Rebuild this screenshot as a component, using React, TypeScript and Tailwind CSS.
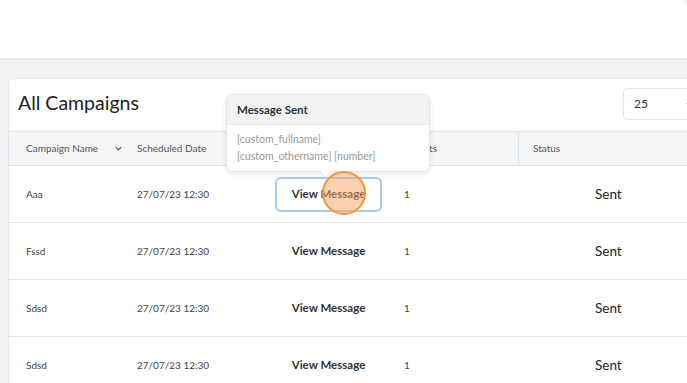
import React from "react";

const rows = [
  { name: "Aaa", focused: true },
  { name: "Fssd" },
  { name: "Sdsd" },
  { name: "Sdsd" },
];

export default function App() {
  return (
    <div
      className="relative w-[687px] h-[383px] overflow-hidden bg-[#f1f2f4]"
      style={{ fontFamily: 'Lato, "Noto Sans", sans-serif' }}
    >
      <div className="h-[59px] w-full bg-white rounded-tr-[6px] border-b border-[#e2e4e8] shadow-[0_1px_2px_rgba(0,0,0,0.06)]" />
      <div className="pt-[19px] pl-[8px]">
        <div className="w-[740px] bg-white rounded-[6px] border border-[#e6e8eb] overflow-hidden">
          <div className="h-[52px] flex items-start justify-between">
            <div className="pl-[9px] pt-[11px] text-[19.5px] leading-[26px] text-[#222] whitespace-nowrap">All Campaigns</div>
            <div className="mt-[9px] mr-[44px] w-[80px] h-[32px] border border-[#e3e5e8] rounded-[4px] flex items-center justify-between pl-[10px] pr-[8px] text-[12px] text-[#333]">
              <span>25</span>
              <svg width="9" height="9" viewBox="0 0 10 10" fill="none" stroke="#666" strokeWidth="1.3">
                <path d="M2 3.5 L5 6.5 L8 3.5" />
              </svg>
            </div>
          </div>
          <div className="grid grid-cols-[111px_140px_130px_128px_1fr] h-[35px] bg-[#f4f5f7] border-y border-[#dfe2e6] text-[10px] text-[#555] items-center whitespace-nowrap">
            <div className="pl-[17px] flex items-center h-full">
              <span>Campaign Name</span>
              <svg className="ml-[16px] shrink-0" width="9" height="9" viewBox="0 0 10 10" fill="none" stroke="#555" strokeWidth="1.3">
                <path d="M2 3.5 L5 6.5 L8 3.5" />
              </svg>
            </div>
            <div className="pl-[17px]">Scheduled Date</div>
            <div />
            <div className="pl-[8px] h-full flex items-center">Contacts</div>
            <div className="pl-[14px] h-full flex items-center border-l border-[#dfe2e6]">Status</div>
          </div>
          {rows.map((r, i) => (
            <div
              key={i}
              className="grid grid-cols-[111px_140px_130px_128px_1fr] h-[57px] border-b border-[#e3e5e8] items-center text-[10px] text-[#444] whitespace-nowrap"
            >
              <div className="pl-[17px]">{r.name}</div>
              <div className="pl-[17px]">27/07/23 12:30</div>
              <div className="pl-[15px]">
                <div
                  className={
                    "w-[107px] h-[35px] rounded-[6px] flex items-center justify-center text-[11.5px] font-bold text-[#333] " +
                    (r.focused ? "border-2 border-[#a9c8f2]" : "border-2 border-transparent")
                  }
                >
                  View Message
                </div>
              </div>
              <div className="pl-[14px]">1</div>
              <div className="pl-[77px] text-[13.5px] text-[#222]">Sent</div>
            </div>
          ))}
        </div>
      </div>

      <div className="absolute left-[226px] top-[94px] w-[204px] rounded-[6px] border border-[#e3e5e8] bg-white shadow-[0_2px_6px_rgba(0,0,0,0.08)]">
        <div className="h-[30px] bg-[#f1f2f4] rounded-t-[6px] border-b border-[#e6e8eb] flex items-center pl-[10px] text-[11.5px] font-bold text-[#333]">
          Message Sent
        </div>
        <div className="px-[10px] pt-[6px] pb-[6px] text-[10.5px] leading-[17px] text-[#9a9a9a]">
          <div>[custom_fullname]</div>
          <div>[custom_othername] [number]</div>
        </div>
        <div className="absolute left-[94px] bottom-[-5px] w-[9px] h-[9px] bg-white border-r border-b border-[#e3e5e8] rotate-45" />
      </div>

      <div className="absolute left-[322px] top-[171px] w-[44px] h-[44px] rounded-full bg-[rgba(250,165,100,0.5)] border-2 border-[#f59440]" />
    </div>
  );
}
